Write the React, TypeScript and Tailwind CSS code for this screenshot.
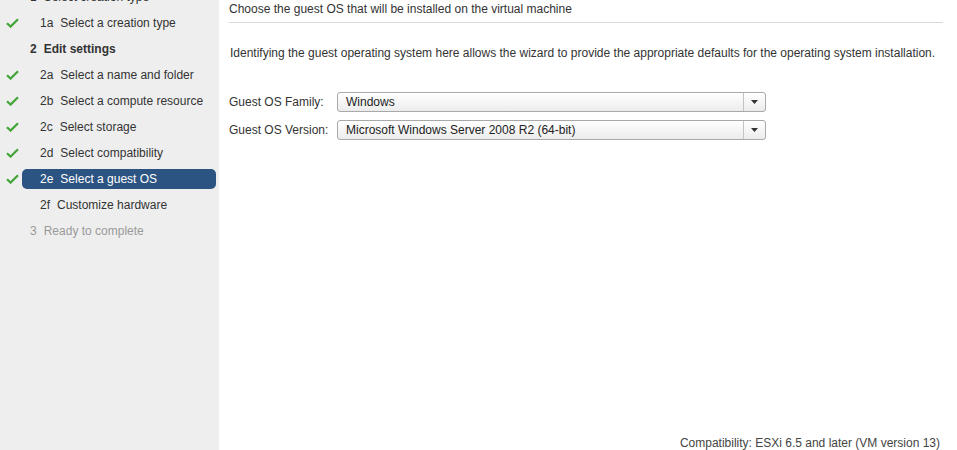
import React from 'react';

const steps = [
  { id: '1', num: '1', label: 'Select creation type', level: 0, done: false, state: 'normal' },
  { id: '1a', num: '1a', label: 'Select a creation type', level: 1, done: true, state: 'normal' },
  { id: '2', num: '2', label: 'Edit settings', level: 0, done: false, state: 'bold' },
  { id: '2a', num: '2a', label: 'Select a name and folder', level: 1, done: true, state: 'normal' },
  { id: '2b', num: '2b', label: 'Select a compute resource', level: 1, done: true, state: 'normal' },
  { id: '2c', num: '2c', label: 'Select storage', level: 1, done: true, state: 'normal' },
  { id: '2d', num: '2d', label: 'Select compatibility', level: 1, done: true, state: 'normal' },
  { id: '2e', num: '2e', label: 'Select a guest OS', level: 1, done: true, state: 'active' },
  { id: '2f', num: '2f', label: 'Customize hardware', level: 1, done: false, state: 'normal' },
  { id: '3', num: '3', label: 'Ready to complete', level: 0, done: false, state: 'disabled' },
];

const Check = () => (
  <svg width="13" height="10" viewBox="0 0 13 10" className="shrink-0">
    <path d="M1 5.2 L4.6 8.6 L12 1.2" fill="none" stroke="#43a538" strokeWidth="2.2" />
  </svg>
);

const Select: React.FC<{ value: string }> = ({ value }) => (
  <div className="flex h-[20px] w-[429px] items-center rounded-[3px] border border-[#a9a9a9] bg-gradient-to-b from-[#ffffff] to-[#ececec]">
    <span className="flex-1 pl-[8px] text-[12px] text-[#222]">{value}</span>
    <div className="flex h-full w-[22px] items-center justify-center border-l border-[#c4c4c4]">
      <svg width="7" height="4" viewBox="0 0 7 4">
        <path d="M0 0 L7 0 L3.5 4 Z" fill="#333" />
      </svg>
    </div>
  </div>
);

const stepColor = (state: string) => {
  if (state === 'active') return 'bg-[#2c5482] text-white';
  if (state === 'disabled') return 'text-[#9a9a9a]';
  if (state === 'bold') return 'font-bold text-[#333]';
  return 'text-[#333]';
};

export default function App() {
  return (
    <div
      className="flex h-[450px] w-[957px] overflow-hidden bg-white"
      style={{ fontFamily: '"Liberation Sans", Arial, sans-serif' }}
    >
      {/* Wizard steps */}
      <div className="h-full w-[219px] shrink-0 bg-[#eeeeee]">
        <div className="-mt-[16px]">
          {steps.map(step => (
            <div key={step.id} className="flex h-[26px] items-center">
              <div className="flex w-[22px] justify-center pl-[2px]">{step.done && <Check />}</div>
              <div
                className={`flex h-[20px] w-[194px] items-center rounded-[5px] text-[12px] ${stepColor(step.state)} ${
                  step.level === 1 ? 'pl-[18px]' : 'pl-[8px]'
                }`}
              >
                <span className="mr-[7px]">{step.num}</span>
                <span>{step.label}</span>
              </div>
            </div>
          ))}
        </div>
      </div>

      {/* Content */}
      <div className="flex h-full flex-1 flex-col pl-[10px] pr-[14px]">
        <div className="border-b border-[#d9d9d9] pb-[5px] pt-[1px] text-[12px] leading-[16px] text-[#333]">
          Choose the guest OS that will be installed on the virtual machine
        </div>
        <p className="mt-[23px] pl-[1px] text-[12px] leading-[14px] text-[#333]">
          Identifying the guest operating system here allows the wizard to provide the appropriate defaults for the operating system installation.
        </p>
        <div className="mt-[32px] flex flex-col gap-[8px]">
          <div className="flex items-center">
            <span className="w-[108px] text-[12px] text-[#333]">Guest OS Family:</span>
            <Select value="Windows" />
          </div>
          <div className="flex items-center">
            <span className="w-[108px] text-[12px] text-[#333]">Guest OS Version:</span>
            <Select value="Microsoft Windows Server 2008 R2 (64-bit)" />
          </div>
        </div>
        <div className="mt-auto flex justify-end pb-[1px] pr-[3px] text-[12px] leading-[12px] text-[#444]">
          Compatibility: ESXi 6.5 and later (VM version 13)
        </div>
      </div>
    </div>
  );
}
